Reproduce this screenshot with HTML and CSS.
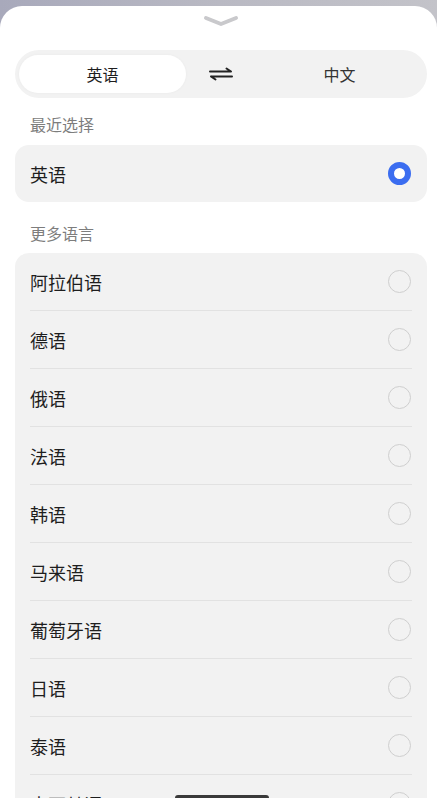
FILE: index.html
```html
<!DOCTYPE html>
<html lang="zh">
<head>
<meta charset="utf-8">
<link rel="stylesheet" href="styles.css">
</head>
<body>
<div class="backdrop">
  <div class="sheet">
    <div class="handle">
      <svg width="38" height="14" viewBox="0 0 38 14"><path d="M4 4 L19 10 L34 4" fill="none" stroke="#c9c9cc" stroke-width="4" stroke-linecap="round" stroke-linejoin="round"/></svg>
    </div>
    <div class="segment">
      <div class="seg-item active">英语</div>
      <div class="swap">
        <svg width="24" height="14" viewBox="0 0 24 14"><path d="M1 4.5 H22 M17.5 1.5 L22 4.5" fill="none" stroke="#222" stroke-width="2" stroke-linecap="round"/><path d="M23 9.5 H2 M6.5 12.5 L2 9.5" fill="none" stroke="#222" stroke-width="2" stroke-linecap="round"/></svg>
      </div>
      <div class="seg-item">中文</div>
    </div>
    <div class="label">最近选择</div>
    <div class="card">
      <div class="row"><span>英语</span><span class="radio checked"></span></div>
    </div>
    <div class="label label-more">更多语言</div>
    <div class="card">
      <div class="row"><span>阿拉伯语</span><span class="radio"></span></div>
      <div class="row"><span>德语</span><span class="radio"></span></div>
      <div class="row"><span>俄语</span><span class="radio"></span></div>
      <div class="row"><span>法语</span><span class="radio"></span></div>
      <div class="row"><span>韩语</span><span class="radio"></span></div>
      <div class="row"><span>马来语</span><span class="radio"></span></div>
      <div class="row"><span>葡萄牙语</span><span class="radio"></span></div>
      <div class="row"><span>日语</span><span class="radio"></span></div>
      <div class="row"><span>泰语</span><span class="radio"></span></div>
      <div class="row"><span>土耳其语</span><span class="radio"></span></div>
    </div>
  </div>
  <div class="home-bar"></div>
</div>
</body>
</html>
```
FILE: styles.css
```css
html, body {
  margin: 0;
  padding: 0;
  height: 100%;
  overflow: hidden;
}
body {
  font-family: "Noto Sans CJK SC", "Noto Sans", sans-serif;
  color: #222;
}
.backdrop {
  position: relative;
  height: 798px;
  background: linear-gradient(90deg, #a8a9bb, #b9b9c3 50%, #c3c3c9);
  padding-top: 6px;
  box-sizing: border-box;
  overflow: hidden;
}
.sheet {
  background: #fff;
  border-radius: 22px 22px 0 0;
  padding: 0 10px 0 15px;
  height: 100%;
}
.handle {
  height: 44px;
  display: flex;
  justify-content: center;
  padding-top: 8px;
  box-sizing: border-box;
}
.handle svg { display: block; }
.segment {
  height: 48px;
  background: #f2f2f2;
  border-radius: 24px;
  display: flex;
  align-items: center;
  padding: 0 4px;
  box-sizing: border-box;
}
.seg-item {
  flex: 0 0 167px;
  height: 38px;
  border-radius: 19px;
  display: flex;
  align-items: center;
  justify-content: center;
  font-size: 16px;
  color: #1e1e1e;
}
.seg-item:last-child { flex: 1 1 auto; color: #333; }
.seg-item.active {
  background: #fff;
  box-shadow: 0 0 3px rgba(0,0,0,0.04);
}
.swap {
  width: 70px;
  display: flex;
  justify-content: center;
  align-items: center;
}
.swap svg { display: block; }
.label {
  font-size: 16px;
  color: #7d7d7d;
  padding-left: 15px;
  height: 47px;
  line-height: 20px;
  padding-top: 16px;
  box-sizing: border-box;
}
.label-more {
  height: 51px;
  padding-top: 21px;
}
.card {
  background: #f2f2f2;
  border-radius: 14px;
  padding: 0 15px;
}
.row {
  height: 58px;
  display: flex;
  align-items: center;
  justify-content: space-between;
  font-size: 18px;
  color: #1e1e1e;
  border-top: 1px solid #e2e2e2;
  box-sizing: border-box;
}
.card .row:first-child { border-top: none; height: 57px; }
.radio {
  width: 23px;
  height: 23px;
  border-radius: 50%;
  border: 1.5px solid #cfcfcf;
  box-sizing: border-box;
  margin-right: 1px;
}
.radio.checked {
  border: 6px solid #3b6df0;
  background: #fff;
}
.home-bar {
  position: absolute;
  left: 175px;
  top: 795px;
  width: 94px;
  height: 6px;
  border-radius: 3px;
  background: #3a3a3a;
}
```
